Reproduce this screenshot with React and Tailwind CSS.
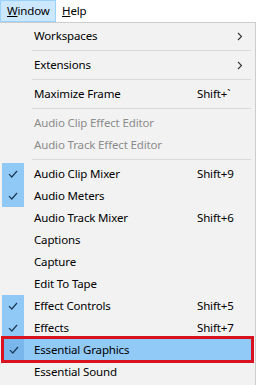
import React from 'react'

const items = [
  { label: 'Workspaces', arrow: true },
  { sep: true },
  { label: 'Extensions', arrow: true },
  { sep: true },
  { label: 'Maximize Frame', shortcut: 'Shift+`' },
  { sep: true },
  { label: 'Audio Clip Effect Editor', disabled: true },
  { label: 'Audio Track Effect Editor', disabled: true },
  { sep: true },
  { label: 'Audio Clip Mixer', shortcut: 'Shift+9', checked: true },
  { label: 'Audio Meters', checked: true },
  { label: 'Audio Track Mixer', shortcut: 'Shift+6' },
  { label: 'Captions' },
  { label: 'Capture' },
  { label: 'Edit To Tape' },
  { label: 'Effect Controls', shortcut: 'Shift+5', checked: true },
  { label: 'Effects', shortcut: 'Shift+7', checked: true },
  { label: 'Essential Graphics', checked: true, active: true },
  { label: 'Essential Sound' },
]

const Check = () => (
  <svg width="10" height="8" viewBox="0 0 10 8" fill="none">
    <path d="M1 4.2 L3.8 7 L9 1" stroke="#1c3a57" strokeWidth="1.2" />
  </svg>
)

const Row = ({ item }) => {
  if (item.sep) {
    return (
      <div className="h-[7px] flex items-center pl-[32px] pr-[4px]">
        <div className="h-px w-full bg-[#d9d9d9]" />
      </div>
    )
  }
  return (
    <div className={`relative h-[22px] flex items-center ${item.active ? 'bg-[#91c9f7] mx-[4px]' : 'mx-[2px]'}`}>
      <div
        className={`h-full flex items-center justify-center shrink-0 ${item.active ? 'w-[20px]' : 'w-[22px]'} ${
          item.checked ? (item.active ? 'bg-[#78b6ec]' : 'bg-[#90c8f6]') : ''
        }`}
      >
        {item.checked && <Check />}
      </div>
      <span className={`pl-[10px] w-[173px] shrink-0 whitespace-nowrap ${item.disabled ? 'text-[#8c8c8c]' : 'text-black'}`}>
        {item.label}
      </span>
      {item.shortcut && <span className="text-black whitespace-nowrap">{item.shortcut}</span>}
      {item.arrow && (
        <svg className="ml-[40px]" width="6" height="9" viewBox="0 0 6 9" fill="none">
          <path d="M1 1 L4.5 4.5 L1 8" stroke="#333" strokeWidth="1.1" />
        </svg>
      )}
      {item.active && (
        <div className="absolute -left-[3px] -right-[3px] -top-[3px] -bottom-[2px] border-[3px] border-[#d8131f]" />
      )}
    </div>
  )
}

export default function App() {
  return (
    <div className="w-[256px] h-[385px] overflow-hidden bg-white text-[11.5px] tracking-[-0.15px] leading-none font-['Segoe_UI','Noto_Sans',sans-serif]">
      <div className="h-[22px] flex items-stretch">
        <div className="w-[56px] bg-[#cce8ff] border border-[#99d1ff] flex items-center pl-[6px]">
          <span><u>W</u>indow</span>
        </div>
        <div className="flex items-center pl-[6px]">
          <span><u>H</u>elp</span>
        </div>
      </div>
      <div className="bg-[#f2f2f2] border-t border-r border-[#cccccc] pt-[2px] h-full">
        {items.map((item, i) => (
          <Row key={i} item={item} />
        ))}
      </div>
    </div>
  )
}
